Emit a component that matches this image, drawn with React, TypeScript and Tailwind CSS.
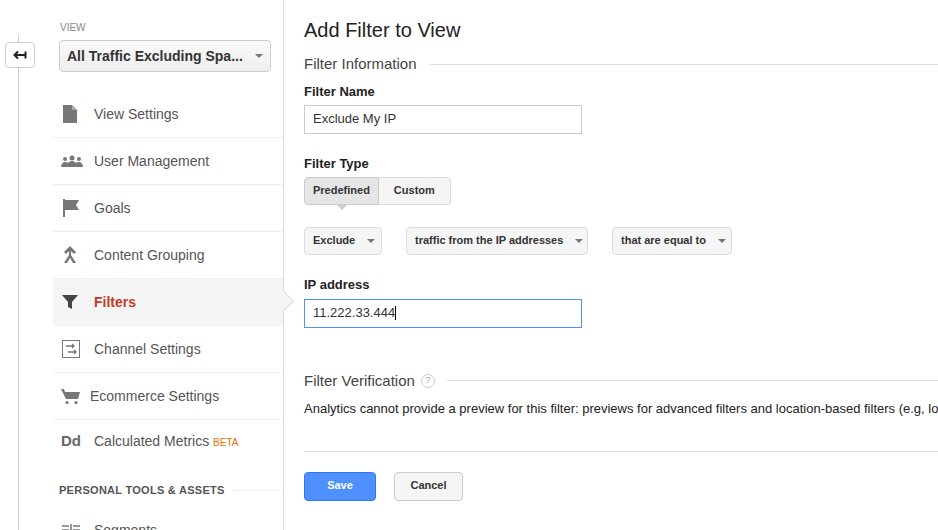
import React from 'react';

const font = { fontFamily: 'Arial, "Liberation Sans", sans-serif' };

function Caret() {
  return <span className="ml-3 inline-block w-0 h-0 border-x-[4px] border-x-transparent border-t-[4px] border-t-[#777]" />;
}

function NavIcon({ name }: { name: string }) {
  const c = '#777';
  switch (name) {
    case 'doc':
      return <svg width="18" height="20" viewBox="0 0 18 20"><path d="M2 1h9l5 5v13H2z" fill={c} /><path d="M11 1v5h5" fill="#aaa" /></svg>;
    case 'users':
      return <svg width="22" height="14" viewBox="0 0 22 14"><circle cx="4" cy="5" r="2" fill={c} /><circle cx="11" cy="4" r="2.5" fill={c} /><circle cx="18" cy="5" r="2" fill={c} /><path d="M0 13c0-3 2-5 4-5s3 1 3 1 2-2 4-2 4 2 4 2 1-1 3-1 4 2 4 5z" fill={c} /></svg>;
    case 'flag':
      return <svg width="20" height="20" viewBox="0 0 20 20"><path d="M2 1h2v18H2z" fill={c} /><path d="M4 2h14l-3 5 3 5H4z" fill={c} /></svg>;
    case 'group':
      return <svg width="18" height="20" viewBox="0 0 18 20"><path d="M9 1l6 6-2 2-3-3v4l5 8h-3l-3-5-3 5H3l5-8V6L5 9 3 7z" fill={c} /></svg>;
    case 'filter':
      return <svg width="18" height="18" viewBox="0 0 18 18"><path d="M1 2h16l-6 7v7l-4-2V9z" fill="#444" /></svg>;
    case 'channel':
      return <svg width="20" height="20" viewBox="0 0 20 20"><rect x="1.5" y="1.5" width="17" height="17" fill="none" stroke={c} /><path d="M5 7h8M11 5l2 2-2 2M7 13h8M13 11l2 2-2 2" stroke={c} strokeWidth="1.3" fill="none" /></svg>;
    case 'cart':
      return <svg width="20" height="18" viewBox="0 0 20 18"><path d="M0 2h3l1 3h15l-2 7H5z" fill={c} /><circle cx="6" cy="15.5" r="1.6" fill={c} /><circle cx="15" cy="15.5" r="1.6" fill={c} /></svg>;
    case 'dd':
      return <span className="font-bold text-[15px] text-[#666]">Dd</span>;
    default:
      return <svg width="20" height="14" viewBox="0 0 20 14"><path d="M1 2h7M1 6h7M1 10h7M12 2h7M12 6h7M12 10h7M10 0v14" stroke={c} strokeWidth="1.5" /></svg>;
  }
}

const items = [
  ['doc', 'View Settings'],
  ['users', 'User Management'],
  ['flag', 'Goals'],
  ['group', 'Content Grouping'],
  ['filter', 'Filters'],
  ['channel', 'Channel Settings'],
  ['cart', 'Ecommerce Settings'],
];

export default function App() {
  return (
    <div className="w-[938px] h-[530px] overflow-hidden bg-white flex text-[#333]" style={font}>
      <div className="w-[53px] shrink-0 relative">
        <div className="absolute left-[18px] top-[35px] bottom-0 w-px bg-[#ccc]" />
        <div className="absolute left-[5px] top-[42px] w-[30px] h-[26px] bg-white border border-[#ccc] rounded-sm flex items-center justify-center">
          <svg width="14" height="10" viewBox="0 0 14 10"><path d="M12 5H2M5 1.5L1.5 5 5 8.5M12.5 1.5v7" stroke="#222" strokeWidth="2" fill="none" /></svg>
        </div>
      </div>
      <div className="w-[231px] shrink-0 border-r border-[#ddd] pt-[20px]">
        <div className="pl-[7px] text-[10px] text-[#888]">VIEW</div>
        <div className="ml-[6px] mt-[5px] w-[212px] h-[32px] border border-[#ccc] rounded-sm bg-gradient-to-b from-[#fafafa] to-[#eee] flex items-center justify-between px-[7px] text-[14px] font-bold text-[#333]">
          All Traffic Excluding Spa...<Caret />
        </div>
        <div className="mt-[19px]">
          {items.map(([ic, label]) => {
            const active = label === 'Filters';
            return (
              <div key={label} className={`relative h-[47px] flex items-center border-b border-[#eee] ${active ? 'bg-[#f5f5f5]' : ''}`}>
                <div className="w-[41px] pl-[8px] flex items-center">
                  <NavIcon name={ic} />
                </div>
                <span className={`text-[14px] ${active ? 'text-[#c53929] font-bold' : 'text-[#555]'} ${ic === 'cart' ? '-ml-1' : ''}`}>{label}</span>
                {active && <div className="absolute -right-[8px] top-[15px] w-[14px] h-[14px] rotate-45 bg-[#f5f5f5] border-t border-r border-[#ddd]" />}
              </div>
            );
          })}
          <div className="h-[42px] flex items-center">
            <div className="w-[41px] pl-[8px]"><NavIcon name="dd" /></div>
            <span className="text-[14px] text-[#555]">Calculated Metrics <span className="text-[10px] text-[#e37400]">BETA</span></span>
          </div>
          <div className="mt-[20px] flex items-center pl-[6px] text-[11px] font-bold tracking-wide text-[#555]">
            PERSONAL TOOLS &amp; ASSETS <div className="ml-2 flex-1 h-px bg-[#eee]" />
          </div>
          <div className="mt-[22px] flex items-center h-[20px]">
            <div className="w-[41px] pl-[8px]"><NavIcon name="seg" /></div>
            <span className="text-[14px] text-[#555]">Segments</span>
          </div>
        </div>
      </div>
      <div className="flex-1 pl-[20px] pt-[18px] overflow-hidden leading-tight">
        <div className="text-[20px] text-[#222]">Add Filter to View</div>
        <div className="mt-[12px] flex items-center text-[15px] text-[#444]">Filter Information<div className="ml-3 flex-1 h-px bg-[#ddd]" /></div>
        <div className="mt-[10px] text-[13px] font-bold text-[#222]">Filter Name</div>
        <div className="mt-[5px] w-[278px] h-[29px] border border-[#ccc] flex items-center px-[8px] text-[13px]">Exclude My IP</div>
        <div className="mt-[22px] text-[13px] font-bold text-[#222]">Filter Type</div>
        <div className="mt-[5px] flex">
          <div className="relative h-[28px] px-[8px] flex items-center text-[11px] font-bold bg-[#e5e5e5] border border-[#ccc] rounded-l-sm">Predefined
            <div className="absolute left-[31px] -bottom-[6px] w-0 h-0 border-x-[6px] border-x-transparent border-t-[6px] border-t-[#ccc]" />
          </div>
          <div className="h-[28px] px-[15px] flex items-center text-[11px] font-bold bg-[#f5f5f5] border border-l-0 border-[#ddd] rounded-r-sm">Custom</div>
        </div>
        <div className="mt-[22px] flex gap-[24px]">
          {[['Exclude', 78], ['traffic from the IP addresses', 182], ['that are equal to', 120]].map(([t, w]) => (
            <div key={t as string} style={{ width: w as number }} className="h-[28px] px-[8px] flex items-center justify-between whitespace-nowrap text-[11px] font-bold bg-[#f5f5f5] border border-[#ddd] rounded-sm">
              {t}<Caret />
            </div>
          ))}
        </div>
        <div className="mt-[22px] text-[13px] font-bold text-[#222]">IP address</div>
        <div className="mt-[5px] w-[278px] h-[29px] border border-[#4d90fe] flex items-center px-[8px] text-[13px]">11.222.33.444<span className="w-px h-[14px] bg-black" /></div>
        <div className="mt-[44px] flex items-center text-[15px] text-[#444]">Filter Verification
          <span className="ml-[6px] w-[14px] h-[14px] rounded-full border border-[#ccc] text-[9px] text-[#aaa] flex items-center justify-center">?</span>
          <div className="ml-3 flex-1 h-px bg-[#ddd]" />
        </div>
        <div className="mt-[11px] text-[13px] text-[#222] whitespace-nowrap">Analytics cannot provide a preview for this filter: previews for advanced filters and location-based filters (e.g, locations)</div>
        <div className="mt-[33px] h-px bg-[#ddd]" />
        <div className="mt-[20px] flex gap-[18px]">
          <div className="w-[72px] h-[29px] bg-[#4d90fe] border border-[#3079ed] rounded-sm text-white text-[11px] font-bold flex items-center justify-center">Save</div>
          <div className="w-[69px] h-[29px] bg-[#f5f5f5] border border-[#ccc] rounded-sm text-[#333] text-[11px] font-bold flex items-center justify-center">Cancel</div>
        </div>
      </div>
    </div>
  );
}
